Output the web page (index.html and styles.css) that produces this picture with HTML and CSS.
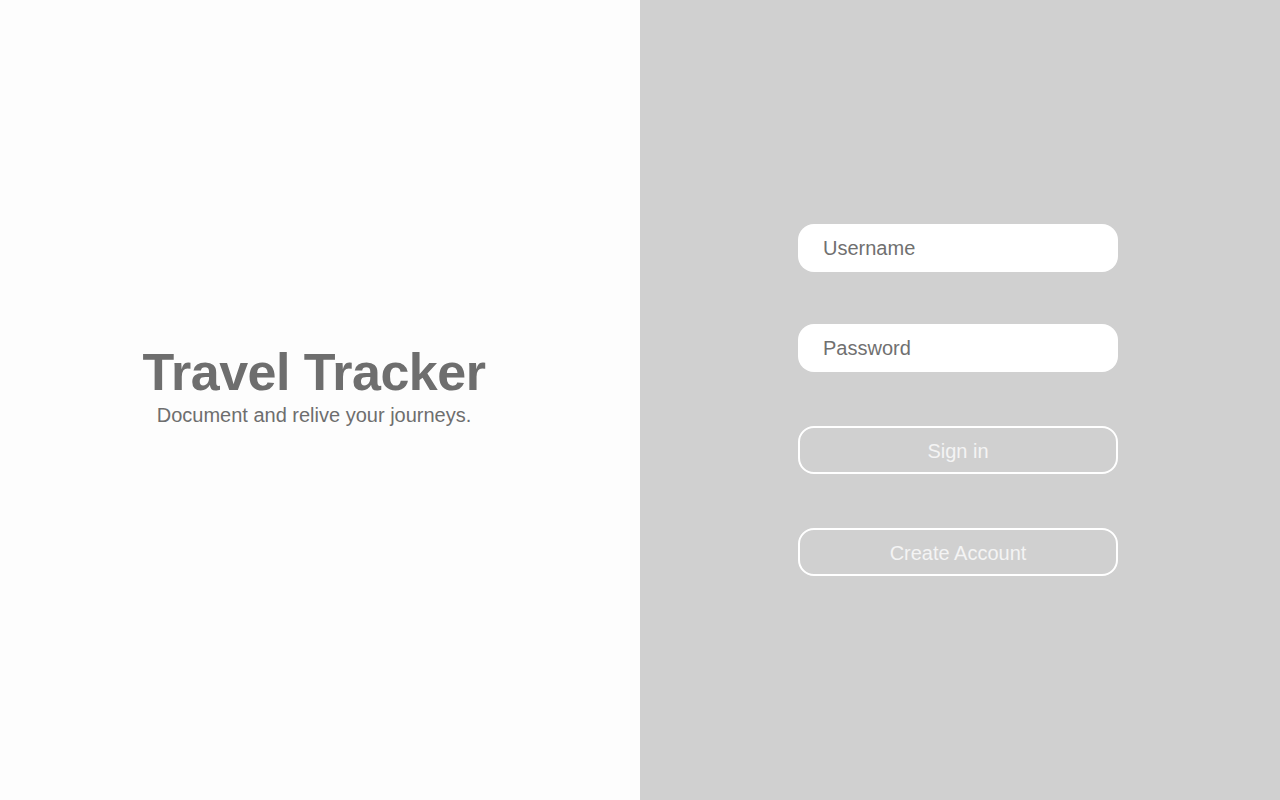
FILE: index.html
```html
<!DOCTYPE html>
<html lang="en">
<head>
<meta charset="utf-8">
<title>Travel Tracker</title>
<link rel="stylesheet" href="styles.css">
</head>
<body>
<main class="page">
  <section class="brand">
    <div class="brand-text">
      <h1 class="title">Travel Tracker</h1>
      <p class="tagline">Document and relive your journeys.</p>
    </div>
  </section>
  <section class="auth">
    <form class="auth-form">
      <input class="field" type="text" placeholder="Username">
      <input class="field field-pass" type="password" placeholder="Password">
      <button class="btn" type="button">Sign in</button>
      <button class="btn" type="button">Create Account</button>
    </form>
  </section>
</main>
</body>
</html>
```
FILE: styles.css
```css
* { box-sizing: border-box; }
html, body { margin: 0; padding: 0; height: 100%; }
body { font-family: "Liberation Sans", Arial, sans-serif; }
.page { display: flex; height: 800px; }
.brand {
  flex: 0 0 50%;
  background: #fdfdfd;
  display: flex;
  align-items: center;
  justify-content: center;
  padding-right: 12px;
  padding-bottom: 29px;
}
.brand-text { text-align: center; color: #6e6e6e; }
.title { margin: 0; font-size: 52px; font-weight: 700; line-height: 54px; letter-spacing: -0.5px; }
.tagline { margin: 4px 0 0; font-size: 20px; line-height: 24px; }
.auth {
  flex: 0 0 50%;
  background: #d0d0d0;
  display: flex;
  align-items: center;
  justify-content: center;
  padding-right: 4px;
}
.auth-form { display: flex; flex-direction: column; gap: 54px; width: 320px; }
.field-pass { margin-top: -2px; }
.field {
  height: 48px;
  border: none;
  border-radius: 16px;
  background: #fff;
  padding: 0 25px;
  font-family: inherit;
  font-size: 20px;
  color: #6e6e6e;
  outline: none;
}
.field::placeholder { color: #707070; }
.btn {
  height: 48px;
  border: 2px solid #fff;
  border-radius: 16px;
  background: transparent;
  color: #f4f4f4;
  font-family: inherit;
  font-size: 20px;
  padding: 3px 0 0;
}
```
